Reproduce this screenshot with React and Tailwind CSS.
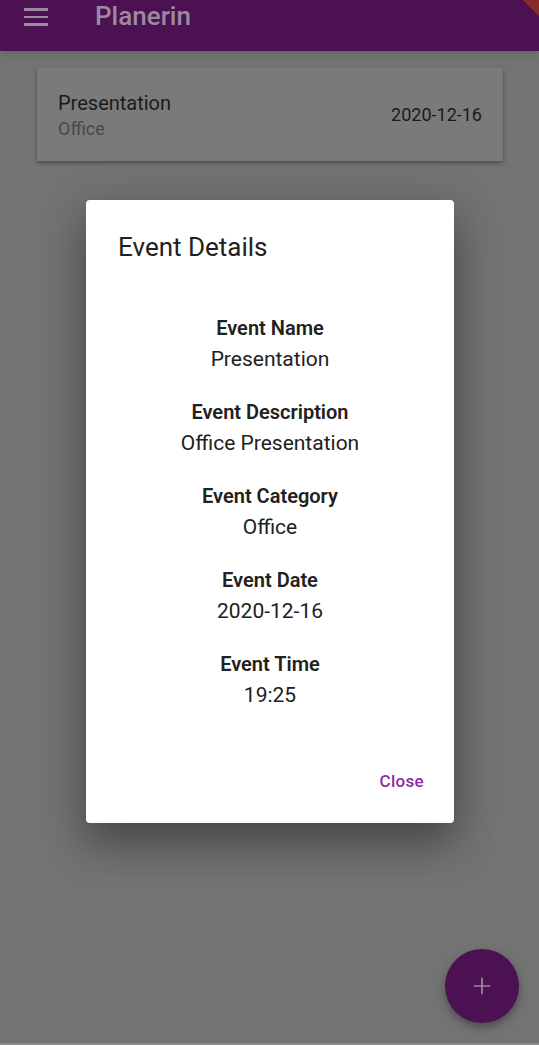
import { FiPlus } from "react-icons/fi";

const details = [
  { label: "Event Name", value: "Presentation" },
  { label: "Event Description", value: "Office Presentation" },
  { label: "Event Category", value: "Office" },
  { label: "Event Date", value: "2020-12-16" },
  { label: "Event Time", value: "19:25" },
];

export default function App() {
  return (
    <div className="relative w-[539px] h-[1045px] overflow-hidden bg-[#737373] font-['Roboto',sans-serif]">
      {/* app bar */}
      <div className="relative h-[51px] bg-[#4b1152] flex items-start shadow-md">
        <div className="ml-[24px] mt-[8px] flex flex-col gap-[5px]">
          <span className="block w-[24px] h-[2.5px] bg-[#9b8aa0]" />
          <span className="block w-[24px] h-[2.5px] bg-[#9b8aa0]" />
          <span className="block w-[24px] h-[2.5px] bg-[#9b8aa0]" />
        </div>
        <h1 className="ml-[47px] mt-[0px] text-[26px] leading-[32px] font-medium text-[#9b8aa0]">
          Planerin
        </h1>
        <div className="absolute -right-[18px] -top-[10px] w-[40px] h-[20px] rotate-45 bg-[#8a2a2a]" />
      </div>

      {/* event list */}
      <div className="mt-[17px] ml-[37px] mr-[36px] h-[93px] bg-[#7a7a7a] shadow-[0_2px_4px_rgba(0,0,0,0.35)] flex items-center justify-between pl-[21px] pr-[21px]">
        <div className="flex flex-col">
          <span className="mt-[2px] text-[20px] leading-[26px] text-[#1a1a1a]">Presentation</span>
          <span className="mt-[1px] text-[18px] leading-[24px] text-[#484848]">Office</span>
        </div>
        <span className="text-[18px] leading-[24px] text-[#1a1a1a]">2020-12-16</span>
      </div>

      {/* dialog */}
      <div className="absolute left-[86px] top-[200px] w-[368px] h-[623px] bg-white rounded-[4px] shadow-[0_24px_38px_rgba(0,0,0,0.25),0_9px_46px_rgba(0,0,0,0.2)] flex flex-col">
        <h2 className="pt-[31px] px-[32px] text-[26px] leading-[32px] text-[#212121]">
          Event Details
        </h2>
        <div className="mt-[53px] flex flex-col items-center gap-[26px] text-[#212121]">
          {details.map((d) => (
            <div key={d.label} className="flex flex-col items-center">
              <span className="text-[20px] leading-[24px] font-semibold">{d.label}</span>
              <span className="mt-[4px] text-[21px] leading-[30px]">{d.value}</span>
            </div>
          ))}
        </div>
        <div className="mt-auto mb-[30px] mr-[30px] flex justify-end">
          <button className="text-[17px] leading-[24px] font-medium text-[#8e2aa6] tracking-[0.3px]">
            Close
          </button>
        </div>
      </div>

      {/* fab */}
      <button className="absolute left-[445px] top-[949px] w-[74px] h-[74px] rounded-full bg-[#4b1152] shadow-[0_4px_8px_rgba(0,0,0,0.35)] flex items-center justify-center text-[#9b8aa0]">
        <FiPlus size={26} strokeWidth={1.6} />
      </button>

      <div className="absolute left-0 bottom-0 w-full h-[2px] bg-[#8a8a8a]" />
    </div>
  );
}
